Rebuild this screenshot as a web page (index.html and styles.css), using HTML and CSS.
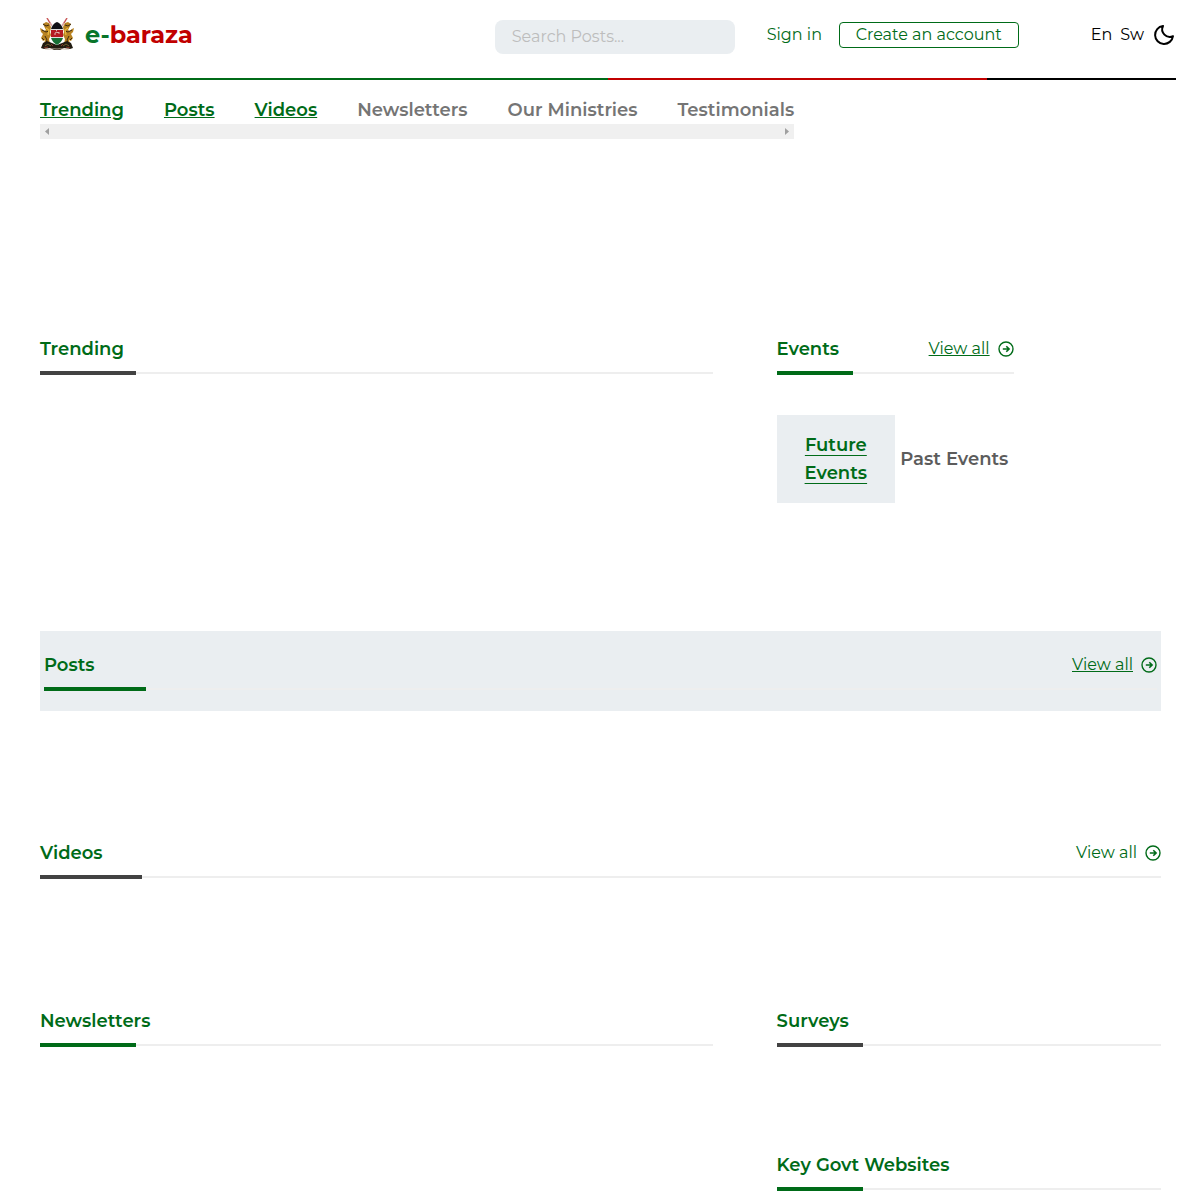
FILE: index.html
```html
<!DOCTYPE html>
<html lang="en">
<head>
<meta charset="utf-8">
<meta name="viewport" content="width=device-width, initial-scale=1">
<title>e-baraza</title>
<link rel="stylesheet" href="styles.css">
</head>
<body>
<svg class="sprite" aria-hidden="true">
  <symbol id="arrow-circle" viewBox="0 0 16 16">
    <circle cx="8" cy="8" r="7" fill="none" stroke="currentColor" stroke-width="1.4"/>
    <path d="M4.8 8h6.2M8.3 5.2 11.1 8l-2.8 2.8" fill="none" stroke="currentColor" stroke-width="1.6"/>
  </symbol>
</svg>

<header class="site-header">
  <div class="topbar">
    <a class="brand" href="#">
      <svg class="crest" viewBox="0 0 34 32" aria-hidden="true">
        <path d="M7 0l5 8M27 0l-5 8" stroke="#dba0a0" stroke-width="1.6"/>
        <path d="M7 0l3 5M27 0l-3 5" stroke="#c94a4a" stroke-width="1"/>
        <path d="M3 6l3-2 3 1 2 4-1 5 1 3-2 4 1 5H4l1-4-2 1-2-3 2-4-2-2-1-4 2 1 2 2 2-1z" fill="#b88322"/>
        <path d="M31 6l-3-2-3 1-2 4 1 5-1 3 2 4-1 5h6l-1-4 2 1 2-3-2-4 2-2 1-4-2 1-2 2-2-1z" fill="#b88322"/>
        <path d="M3 6l3 2 3-1M2 12l4 2 3-1M5 18l2 4-1 3M31 6l-3 2-3-1M32 12l-4 2-3-1M29 18l-2 4 1 3M2 20l2 2M32 20l-2 2" fill="none" stroke="#3d2a10" stroke-width="1"/>
        <path d="M6 10l3 2-1 5M28 10l-3 2 1 5" fill="none" stroke="#e7b840" stroke-width="1.3"/>
        <path d="M1 30l2-5 4-2 5 2 5 2 5-2 5-2 4 2 2 5-3 1-6-1-4 2h-6l-4-2-6 1z" fill="#211b10"/>
        <path d="M5 28l3-2 3 2M29 28l-3-2-3 2" fill="none" stroke="#70602d"/>
        <path d="M4 30l4-1M26 29l4 1M11 26l2 2M23 26l-2 2" stroke="#863728"/>
        <path d="M11 11l1-4 5-3 5 3 1 4v7c-1 4-3 7-6 9-3-2-5-5-6-9z" fill="#ddd"/>
        <path d="M17 4c3 1 5 4 6 7H11c1-3 3-6 6-7z" fill="#101016"/>
        <path d="M11 12h12v7H11z" fill="#b51b23"/>
        <path d="M11 20h12c-1 3-3 5-6 7-3-2-5-4-6-7z" fill="#176f35"/>
        <path d="M15 17v-2l2-1 1 1 1-1v2M16 12l1 1" fill="none" stroke="#e0b5b0" stroke-width="1"/>
        <path d="M5 31c5 1 7-1 12 0 5-1 7 1 12 0" fill="none" stroke="#c9b8a4" stroke-width=".8"/>
      </svg>
      <span class="brand-name"><span class="brand-e">e-</span>baraza</span>
    </a>
    <div class="account">
      <input class="search" type="search" placeholder="Search Posts..." aria-label="Search posts">
      <a class="sign-in" href="#">Sign in</a>
      <button class="create" type="button">Create an account</button>
    </div>
    <div class="prefs">
      <a href="#">En</a>
      <a href="#">Sw</a>
      <button class="theme" type="button" aria-label="Dark mode">
        <svg viewBox="0 0 24 24" aria-hidden="true"><path d="M11 3A9 9 0 1 0 21 13.200 7.600 7.600 0 0 1 11 3z" fill="none" stroke="currentColor" stroke-width="2" stroke-linejoin="round"/></svg>
      </button>
    </div>
  </div>
</header>

<nav class="tabs" aria-label="Sections">
  <div class="tab-list">
    <a class="active" href="#trending">Trending</a>
    <a class="active" href="#posts">Posts</a>
    <a class="active" href="#videos">Videos</a>
    <a href="#newsletters">Newsletters</a>
    <a href="#ministries">Our Ministries</a>
    <a href="#testimonials">Testimonials</a>
  </div>
  <div class="scroll-track" aria-hidden="true">
    <svg viewBox="0 0 4 7"><path d="M4 0v7L0 3.500z"/></svg>
    <svg viewBox="0 0 4 7"><path d="M0 0v7l4-3.500z"/></svg>
  </div>
</nav>

<main class="content">
  <div class="columns first-row">
    <section id="trending">
      <div class="head bar-96 dark"><h2>Trending</h2></div>
    </section>
    <section class="events">
      <div class="head bar-76"><h2>Events</h2>
        <a class="view-all" href="#"><span class="lined">View all</span><svg><use href="#arrow-circle"/></svg></a>
      </div>
      <div class="event-tabs">
        <button class="event-tab selected" type="button">Future Events</button>
        <button class="event-tab" type="button">Past Events</button>
      </div>
    </section>
  </div>

  <section class="posts" id="posts">
    <div class="head bar-102"><h2>Posts</h2>
      <a class="view-all" href="#"><span class="lined">View all</span><svg><use href="#arrow-circle"/></svg></a>
    </div>
  </section>

  <section class="videos" id="videos">
    <div class="head bar-102 dark"><h2>Videos</h2>
      <a class="view-all" href="#"><span>View all</span><svg><use href="#arrow-circle"/></svg></a>
    </div>
  </section>

  <div class="columns">
    <section id="newsletters">
      <div class="head bar-96"><h2>Newsletters</h2></div>
    </section>
    <div class="side">
      <section><div class="head bar-86 dark"><h2>Surveys</h2></div></section>
      <section><div class="head bar-86"><h2>Key Govt Websites</h2></div></section>
    </div>
  </div>
</main>
</body>
</html>
```
FILE: styles.css
```css
:root {
  --green: #006b18;
  --red: #c10000;
  --dark: #424242;
  --panel: #eaeef1;
}

* { box-sizing: border-box; }

body {
  margin: 0;
  background: #fff;
  color: #000;
  font: 400 16px/24px Montserrat, Inter, sans-serif;
}

a { color: inherit; text-decoration: none; }

button {
  padding: 0;
  border: 0;
  background: none;
  color: inherit;
  font: inherit;
  cursor: pointer;
}

h2 { margin: 0; font-size: 18px; line-height: 28px; font-weight: 600; }

.sprite { display: none; }

/* Header */
.site-header { padding: 0 24px 0 40px; }

.topbar {
  display: flex;
  align-items: flex-start;
  height: 80px;
  padding-top: 18px;
  border-bottom: 2px solid;
  border-image: linear-gradient(to right, var(--green) 50%, var(--red) 50% 83.3%, #000 83.3%) 1;
}

.brand { display: flex; align-items: flex-start; gap: 11px; }
.crest { width: 34px; height: 32px; }
.brand-name { color: var(--red); font-size: 24px; line-height: 34px; font-weight: 700; }
.brand-e { color: #08752a; }

.account { display: flex; margin-left: auto; margin-right: 72px; }

.search {
  width: 240px;
  height: 34px;
  margin: 2px 32px 0 0;
  padding: 0 17px 2px;
  border: 0;
  border-radius: 8px;
  background: var(--panel);
  font: inherit;
  appearance: none;
}
.search::placeholder { color: #bdbdbd; opacity: 1; }

.sign-in { width: 72px; padding-top: 5px; color: var(--green); }

.create {
  width: 180px;
  height: 26px;
  margin-top: 4px;
  border: 1px solid var(--green);
  border-radius: 4px;
  color: var(--green);
}

.prefs { display: flex; gap: 8px; padding-top: 5px; }
.theme { width: 24px; height: 24px; }
.theme svg { display: block; width: 24px; height: 24px; }

/* Section tabs */
.tabs { width: max-content; margin: 16px 0 0 40px; }

.tab-list {
  display: flex;
  gap: 40px;
  color: #757575;
  font-size: 18px;
  line-height: 28px;
  font-weight: 600;
  white-space: nowrap;
}
.tab-list .active {
  color: var(--green);
  text-decoration: underline;
}

.scroll-track {
  display: flex;
  align-items: center;
  justify-content: space-between;
  height: 15px;
  padding: 0 5px;
  background: #f0f0f0;
}
.scroll-track svg { width: 4px; height: 7px; fill: #a0a0a0; }

/* Page sections */
.content { padding: 196px 39px 10px 40px; }

.columns { display: grid; grid-template-columns: 60% 1fr; gap: 64px; }
.first-row { min-height: 296px; }

.head {
  --bar: 96px;
  --tone: var(--green);
  display: flex;
  justify-content: space-between;
  height: 40px;
  color: var(--green);
  background:
    linear-gradient(var(--tone), var(--tone)) left bottom / var(--bar) 4px no-repeat,
    linear-gradient(#eee, #eee) left 37px / 100% 2px no-repeat;
}
.dark { --tone: var(--dark); }
.bar-76 { --bar: 76px; }
.bar-86 { --bar: 86px; }
.bar-96 { --bar: 96px; }
.bar-102 { --bar: 102px; }

.view-all { display: flex; align-items: center; gap: 8px; height: 28px; }
.view-all svg { width: 16px; height: 16px; }
.lined { text-decoration: underline; }

.events { width: 237px; }
.event-tabs { display: grid; grid-template-columns: 1fr 1fr; margin-top: 40px; }
.event-tab {
  height: 88px;
  color: #5c5c5c;
  font-size: 18px;
  line-height: 28px;
  font-weight: 600;
}
.event-tab.selected {
  padding: 0 24px;
  background: var(--panel);
  color: var(--green);
  text-decoration: underline 1px;
  text-underline-offset: 4px;
}

.posts { padding: 20px 4px; background: var(--panel); }
.videos { margin: 128px 0; }
.side { display: grid; gap: 104px; align-content: start; }
```
